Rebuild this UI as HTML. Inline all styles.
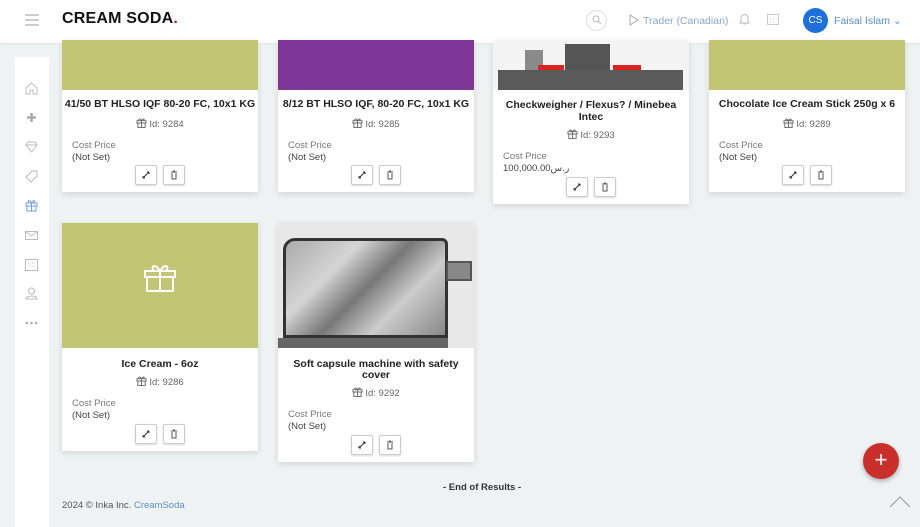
<!DOCTYPE html>
<html><head><meta charset="utf-8"><style>
*{box-sizing:border-box;margin:0;padding:0}
body{width:920px;height:517px;overflow:hidden;background:#eef2f2;font-family:"Liberation Sans",sans-serif;position:relative;color:#333}
.hdr{position:absolute;left:0;top:0;width:920px;height:43px;background:#fff;box-shadow:0 1px 3px rgba(0,0,0,.06)}
.side{position:absolute;left:15px;top:57px;width:34px;height:470px;background:#fff}
.side svg{position:absolute;left:10px}
.card{position:absolute;background:#fff;box-shadow:0 2px 6px rgba(0,0,0,.12);width:196px}
.img{position:absolute;left:0;top:0;width:100%}
.t{position:absolute;left:0;width:100%;text-align:center;font-weight:bold;font-size:10.5px;color:#222;line-height:11px;white-space:nowrap}
.id{position:absolute;left:0;width:100%;text-align:center;font-size:9.5px;color:#666}
.id svg{vertical-align:-1px;margin-right:2px}
.cp{position:absolute;left:10px;font-size:9.5px;color:#777;line-height:12px}
.cp b{font-weight:normal;color:#444;display:block}
.btn{position:absolute;width:22px;height:20px;border:1px solid #ccc;border-radius:2px;background:#fff;box-shadow:0 1px 2px rgba(0,0,0,.15)}
.btn svg{position:absolute;left:5px;top:4px}
</style></head><body>
<svg width="0" height="0" style="position:absolute"><defs><symbol id="g" viewBox="0 0 12 11"><path d="M1 3h10v2.5H1zM2 5.5h8V10.5H2zM6 3v7.5M6 3C4 0 2 1 3.5 3M6 3C8 0 10 1 8.5 3" fill="none" stroke="#666"/></symbol></defs></svg>
<div class="hdr">
<div style="position:absolute;left:25px;top:14px;width:14px;height:2px;background:#ccc;box-shadow:0 5px 0 #ccc,0 10px 0 #ccc"></div>
<div style="position:absolute;left:62px;top:10px;font-size:16px;font-weight:bold;color:#111;letter-spacing:.2px">CREAM SODA<span style="color:#c8102e">.</span></div>
<div style="position:absolute;left:586px;top:10px;width:21px;height:21px;border:1px solid #ddd;border-radius:50%"></div>
<svg style="position:absolute;left:592px;top:15px" width="10" height="10"><circle cx="4" cy="4" r="3" fill="none" stroke="#bbb"/><path d="M6 6l3 3" stroke="#bbb"/></svg>
<svg style="position:absolute;left:629px;top:14px" width="10" height="12"><path d="M1 1l8 5-8 5z" fill="none" stroke="#aab"/></svg>
<div style="position:absolute;left:643px;top:15px;font-size:10.5px;color:#8aa6c4">Trader (Canadian)</div>
<svg style="position:absolute;left:739px;top:13px" width="11" height="13"><path d="M2 9V5a3.5 3.5 0 017 0v4l1 1H1z M4.5 11h2" fill="none" stroke="#bbb"/></svg>
<svg style="position:absolute;left:767px;top:14px" width="12" height="11"><rect x=".5" y=".5" width="11" height="10" fill="none" stroke="#ccc"/><path d="M3 5h1M6 5h1M9 5h1M3 8h1M6 8h1" stroke="#ccc"/></svg>
<div style="position:absolute;left:803px;top:8px;width:25px;height:25px;border-radius:50%;background:#1e6fd9;color:#fff;font-size:10px;line-height:25px;text-align:center">CS</div>
<div style="position:absolute;left:834px;top:15px;font-size:10.5px;color:#5b8fc8">Faisal Islam ⌄</div>
</div>
<div class="side">
<svg style="top:25px" width="13" height="13"><path d="M1 6l5.5-5 5.5 5v6H8V8H5v4H1z" fill="none" stroke="#bbb"/></svg>
<svg style="top:54px" width="13" height="13"><path d="M6.5 2v9M2 6.5h9" stroke="#aaa" stroke-width="2.5"/></svg>
<svg style="top:83px" width="13" height="13"><path d="M3 2h7l2 3-5.5 7L1 5z M1 5h11" fill="none" stroke="#bbb"/></svg>
<svg style="top:113px" width="13" height="13"><path d="M1 7l6-6h5v5l-6 6z" fill="none" stroke="#bbb"/></svg>
<svg style="top:142px" width="13" height="13"><path d="M1 4h11v3H1zM2 7h9v5H2zM6.5 4v8M6.5 4C4 0 2 2 4 4M6.5 4C9 0 11 2 9 4" fill="none" stroke="#6f9fd8"/></svg>
<svg style="top:172px" width="13" height="13"><rect x=".5" y="2.5" width="12" height="8" fill="none" stroke="#bbb"/><path d="M1 3l5.5 4 5.5-4" fill="none" stroke="#bbb"/></svg>
<svg style="top:201px" width="13" height="13"><rect x=".5" y="1.5" width="12" height="11" fill="none" stroke="#bbb"/><path d="M3 5h7M3 8h7" stroke="#ccc" stroke-dasharray="1 1"/></svg>
<svg style="top:230px" width="13" height="13"><circle cx="6.5" cy="4" r="3" fill="none" stroke="#bbb"/><path d="M1 12c0-4 11-4 11 0z" fill="none" stroke="#bbb"/></svg>
<svg style="top:264px" width="13" height="4"><circle cx="2" cy="2" r="1.3" fill="#aaa"/><circle cx="6.5" cy="2" r="1.3" fill="#aaa"/><circle cx="11" cy="2" r="1.3" fill="#aaa"/></svg>
</div>

<!-- row 1 -->
<div class="card" style="left:62px;top:40px;height:152px">
<div class="img" style="height:50px;background:#c1c574"></div>
<div class="t" style="top:59px">41/50 BT HLSO IQF 80-20 FC, 10x1 KG</div>
<div class="id" style="top:78px"><svg width="11" height="10"><use href="#g"/></svg>Id: 9284</div>
<div class="cp" style="top:100px">Cost Price<b>(Not Set)</b></div>
<div class="btn" style="left:73px;top:125px"><svg width="10" height="10"><path d="M2 8l6-6M2 8V6M2 8h2M8 2H6M8 2v2" stroke="#333"/></svg></div>
<div class="btn" style="left:101px;top:125px"><svg width="10" height="10"><path d="M2 2h6M3 3v6h4V3M4 1h2" fill="none" stroke="#555"/></svg></div>
</div>
<div class="card" style="left:278px;top:40px;height:152px">
<div class="img" style="height:50px;background:#80379a"></div>
<div class="t" style="top:59px">8/12 BT HLSO IQF, 80-20 FC, 10x1 KG</div>
<div class="id" style="top:78px"><svg width="11" height="10"><use href="#g"/></svg>Id: 9285</div>
<div class="cp" style="top:100px">Cost Price<b>(Not Set)</b></div>
<div class="btn" style="left:73px;top:125px"><svg width="10" height="10"><path d="M2 8l6-6M2 8V6M2 8h2M8 2H6M8 2v2" stroke="#333"/></svg></div>
<div class="btn" style="left:101px;top:125px"><svg width="10" height="10"><path d="M2 2h6M3 3v6h4V3M4 1h2" fill="none" stroke="#555"/></svg></div>
</div>
<div class="card" style="left:493px;top:40px;height:164px">
<div class="img" style="height:50px;background:#f4f4f4">
<div style="position:absolute;left:32px;top:10px;width:18px;height:40px;background:#8a8a8a"></div>
<div style="position:absolute;left:72px;top:4px;width:45px;height:30px;background:#555"></div>
<div style="position:absolute;left:5px;top:30px;width:185px;height:20px;background:#5a5a5a"></div>
<div style="position:absolute;left:45px;top:25px;width:26px;height:5px;background:#d22"></div>
<div style="position:absolute;left:120px;top:25px;width:28px;height:5px;background:#d22"></div>
</div>
<div class="t" style="top:59px;line-height:12px">Checkweigher / Flexus? / Minebea<br>Intec</div>
<div class="id" style="top:89px"><svg width="11" height="10"><use href="#g"/></svg>Id: 9293</div>
<div class="cp" style="top:111px">Cost Price<b>100,000.00ر.س</b></div>
<div class="btn" style="left:73px;top:137px"><svg width="10" height="10"><path d="M2 8l6-6M2 8V6M2 8h2M8 2H6M8 2v2" stroke="#333"/></svg></div>
<div class="btn" style="left:101px;top:137px"><svg width="10" height="10"><path d="M2 2h6M3 3v6h4V3M4 1h2" fill="none" stroke="#555"/></svg></div>
</div>
<div class="card" style="left:709px;top:40px;height:152px">
<div class="img" style="height:50px;background:#c1c574"></div>
<div class="t" style="top:59px">Chocolate Ice Cream Stick 250g x 6</div>
<div class="id" style="top:78px"><svg width="11" height="10"><use href="#g"/></svg>Id: 9289</div>
<div class="cp" style="top:100px">Cost Price<b>(Not Set)</b></div>
<div class="btn" style="left:73px;top:125px"><svg width="10" height="10"><path d="M2 8l6-6M2 8V6M2 8h2M8 2H6M8 2v2" stroke="#333"/></svg></div>
<div class="btn" style="left:101px;top:125px"><svg width="10" height="10"><path d="M2 2h6M3 3v6h4V3M4 1h2" fill="none" stroke="#555"/></svg></div>
</div>

<!-- row 2 -->
<div class="card" style="left:62px;top:223px;height:228px">
<div class="img" style="height:125px;background:#c1c574">
<svg style="position:absolute;left:81px;top:40px" width="34" height="30"><path d="M2 8h30v6H2zM4 14h26v14H4zM17 8v20M17 8C12 0 7 3 11 8M17 8C22 0 27 3 23 8" fill="none" stroke="#fff" stroke-width="2"/></svg>
</div>
<div class="t" style="top:136px">Ice Cream - 6oz</div>
<div class="id" style="top:153px"><svg width="11" height="10"><use href="#g"/></svg>Id: 9286</div>
<div class="cp" style="top:175px">Cost Price<b>(Not Set)</b></div>
<div class="btn" style="left:73px;top:201px"><svg width="10" height="10"><path d="M2 8l6-6M2 8V6M2 8h2M8 2H6M8 2v2" stroke="#333"/></svg></div>
<div class="btn" style="left:101px;top:201px"><svg width="10" height="10"><path d="M2 2h6M3 3v6h4V3M4 1h2" fill="none" stroke="#555"/></svg></div>
</div>
<div class="card" style="left:278px;top:223px;height:239px">
<div class="img" style="height:125px;background:#e8e8e8">
<div style="position:absolute;left:5px;top:15px;width:165px;height:100px;border:3px solid #333;border-radius:12px 6px 0 0;background:linear-gradient(135deg,#aaa,#d5d5d5 30%,#777 50%,#ccc 70%,#888)"></div>
<div style="position:absolute;left:168px;top:38px;width:26px;height:20px;background:#888;border:2px solid #555"></div>
<div style="position:absolute;left:0;top:115px;width:170px;height:10px;background:#666"></div>
</div>
<div class="t" style="top:136px;line-height:11px">Soft capsule machine with safety<br>cover</div>
<div class="id" style="top:164px"><svg width="11" height="10"><use href="#g"/></svg>Id: 9292</div>
<div class="cp" style="top:186px">Cost Price<b>(Not Set)</b></div>
<div class="btn" style="left:73px;top:212px"><svg width="10" height="10"><path d="M2 8l6-6M2 8V6M2 8h2M8 2H6M8 2v2" stroke="#333"/></svg></div>
<div class="btn" style="left:101px;top:212px"><svg width="10" height="10"><path d="M2 2h6M3 3v6h4V3M4 1h2" fill="none" stroke="#555"/></svg></div>
</div>

<div style="position:absolute;left:443px;top:482px;font-size:9.5px;font-weight:bold;color:#333">- End of Results -</div>
<div style="position:absolute;left:62px;top:500px;font-size:9.5px;color:#555">2024 © Inka Inc. <span style="color:#5b8fc8">CreamSoda</span></div>
<div style="position:absolute;left:863px;top:443px;width:36px;height:36px;border-radius:50%;background:#c9302c;box-shadow:0 2px 5px rgba(0,0,0,.3);color:#fff;font-size:22px;line-height:34px;text-align:center">+</div>
<svg style="position:absolute;left:889px;top:496px" width="22" height="12"><path d="M1 11L11 1l10 10" fill="none" stroke="#999"/></svg>
</body></html>
